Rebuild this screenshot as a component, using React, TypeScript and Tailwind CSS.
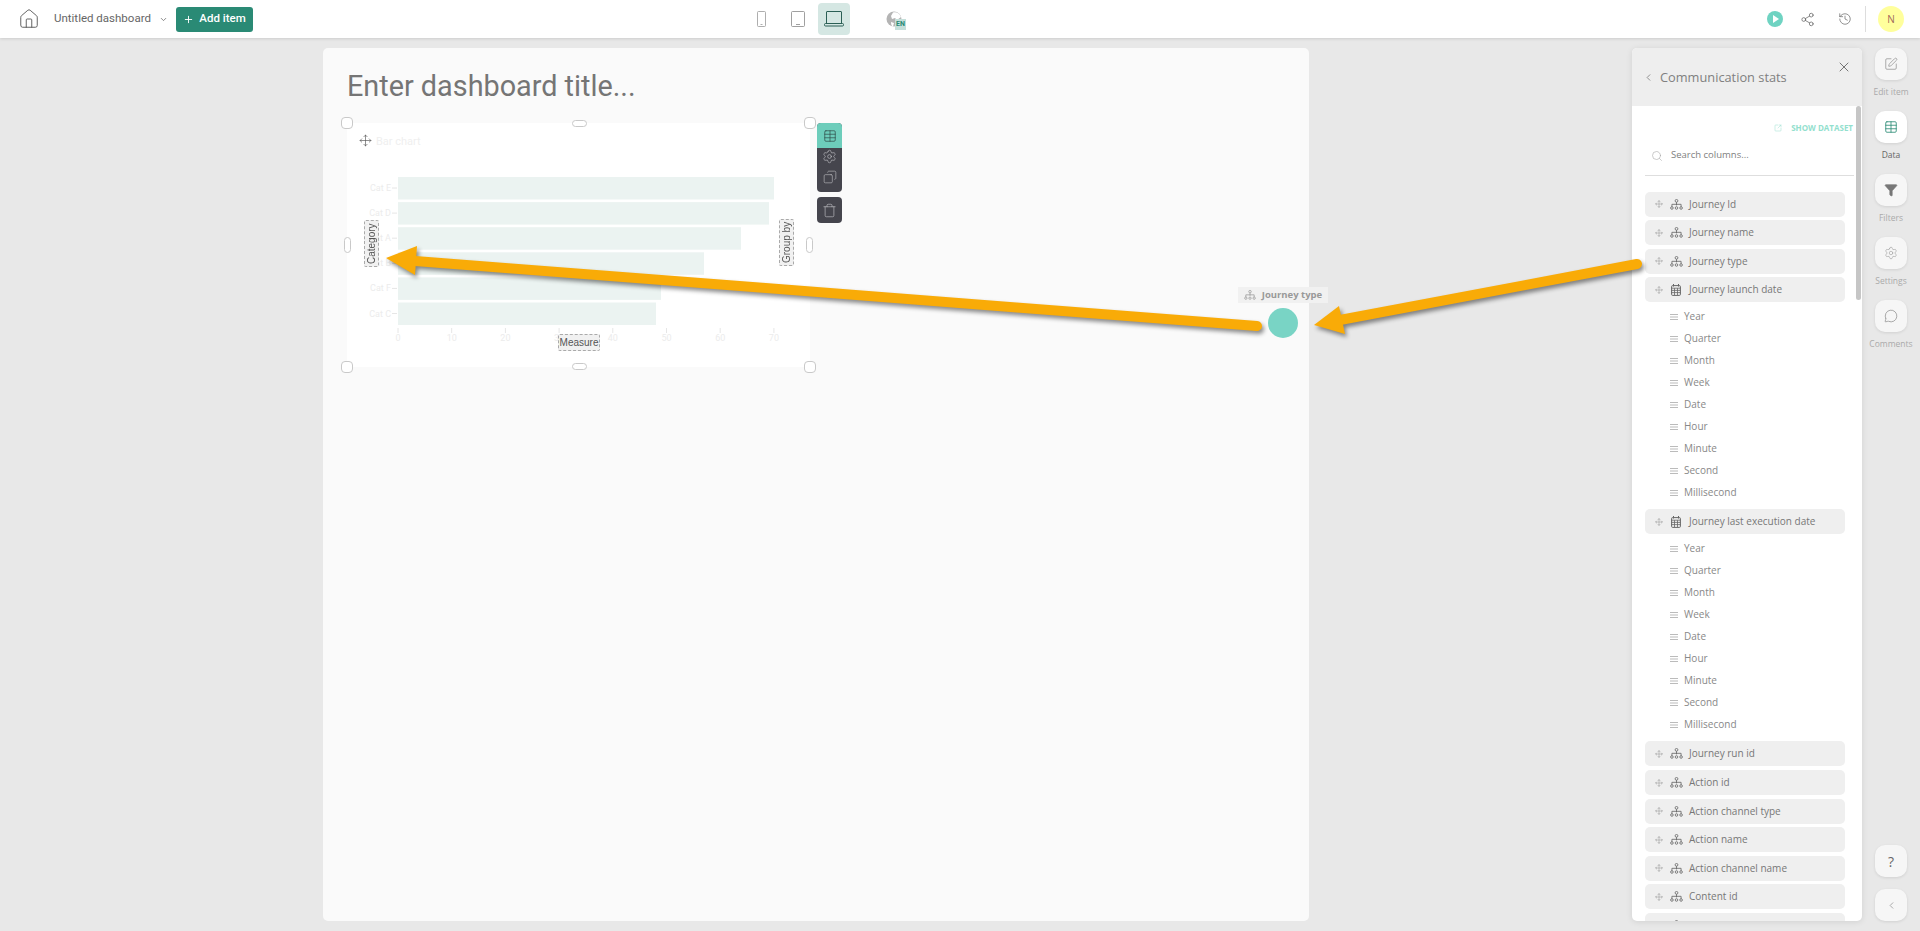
import { ChevronDown, ChevronLeft, Copy, Filter, History, House, MessageCircle, Move, Plus, Search, Settings, Share2, SquareArrowOutUpRight, SquarePen, Table, Trash, X } from "lucide-react"

const dateParts = ["Year", "Quarter", "Month", "Week", "Date", "Hour", "Minute", "Second", "Millisecond"]

const columns = [
  { name: "Journey Id" },
  { name: "Journey name" },
  { name: "Journey type" },
  { name: "Journey launch date", date: true },
  { name: "Journey last execution date", date: true },
  { name: "Journey run id" },
  { name: "Action id" },
  { name: "Action channel type" },
  { name: "Action name" },
  { name: "Action channel name" },
  { name: "Content id" },
  { name: "" }, // only the top edge of this row shows, the panel cuts it off
]

const railItems = [
  { label: "Edit item", icon: <SquarePen className="h-[14px] w-[14px] text-[#8a8a8a]" strokeWidth={1.2} /> },
  { label: "Data", active: true, icon: <Table className="h-[14px] w-[14px] text-[#2a8a75]" strokeWidth={1.4} /> },
  { label: "Filters", icon: <Filter className="h-[14px] w-[14px] fill-[#777] text-[#777]" strokeWidth={1.2} /> },
  { label: "Settings", icon: <Settings className="h-[14px] w-[14px] text-[#999]" strokeWidth={1} /> },
  { label: "Comments", icon: <MessageCircle className="h-[14px] w-[14px] text-[#888]" strokeWidth={1.2} /> },
]

const bars = [
  { label: "Cat E", end: 774 },
  { label: "Cat D", end: 769 },
  { label: "Cat A", end: 741 },
  { label: "Cat B", end: 704 },
  { label: "Cat F", end: 661 },
  { label: "Cat C", end: 656 },
]

function HierarchyIcon({ className }: { className?: string }) {
  return (
    <svg viewBox="0 0 14 12" fill="none" stroke="currentColor" strokeWidth="0.9" className={className}>
      <circle cx="7" cy="2" r="1.5" />
      <path d="M7 3.5V7M2 8.5V5.8H12V8.5" />
      <circle cx="2" cy="9.8" r="1.4" />
      <circle cx="7" cy="9.8" r="1.4" />
      <circle cx="12" cy="9.8" r="1.4" />
    </svg>
  )
}

function DateIcon() {
  return (
    <svg viewBox="0 0 10 12" fill="none" stroke="currentColor" className="h-[12px] w-[10px] text-[#666]">
      <rect x="0.6" y="1.6" width="8.8" height="9.8" rx="1" strokeWidth="1" />
      <path d="M2.5 0V2.5M7.5 0V2.5" strokeWidth="1" />
      <path d="M.6 4.2H9.4M.6 6.4H9.4M.6 8.6H9.4M3.5 4.2V11M6.5 4.2V11" strokeWidth="0.8" />
    </svg>
  )
}

function LinesIcon() {
  return (
    <svg viewBox="0 0 8 6" className="h-[6px] w-[8px] shrink-0 text-[#aaa]" stroke="currentColor" strokeWidth="0.8">
      <path d="M0 .5H8M0 3H8M0 5.5H8" />
    </svg>
  )
}

function ColumnRow({ name, date }: { name: string; date?: boolean }) {
  return (
    <div className="flex h-[25px] w-[200px] shrink-0 items-center rounded-[5px] bg-[#efefef] pl-[10px] text-[10px] text-[#777]">
      <Move className="h-[8px] w-[8px] text-[#999]" strokeWidth={1.6} />
      <span className="ml-[6px] flex w-[14px] justify-center">
        {date ? <DateIcon /> : <HierarchyIcon className="h-[11px] w-[13px] text-[#666]" />}
      </span>
      <span className="ml-[6px] whitespace-nowrap">{name}</span>
    </div>
  )
}

function Handle({ className }: { className: string }) {
  return <div className={`absolute rounded-[4px] border border-[#c9c9c9] bg-white ${className}`} />
}

function BarChart() {
  const ticks = [0, 10, 20, 30, 40, 50, 60, 70]
  return (
    <svg viewBox="347 123 463 244" className="h-full w-full">
      <text x="376" y="145" fontSize="11" fill="#efefef" fontFamily="Roboto, sans-serif">Bar chart</text>
      {bars.map((b, i) => {
        const top = 177 + i * 25.1
        return (
          <g key={b.label}>
            <rect x="398" y={top} width={b.end - 398} height="22.5" fill="#ebf3f1" />
            <text x="391" y={top + 14} fontSize="9" textAnchor="end" fill="#ececec" fontFamily="Roboto, sans-serif">{b.label}</text>
            <path d={`M392 ${top + 11}H397`} stroke="#e6e6e6" strokeWidth="1" />
          </g>
        )
      })}
      {ticks.map((t) => {
        const x = 398 + t * 5.37
        return (
          <g key={t}>
            <path d={`M${x} 328V333`} stroke="#e6e6e6" strokeWidth="1" />
            <text x={x} y="341" fontSize="9" textAnchor="middle" fill="#ececec" fontFamily="Roboto, sans-serif">{t}</text>
          </g>
        )
      })}
    </svg>
  )
}

function DropLabel({ text, className }: { text: string; className: string }) {
  return (
    <div className={`absolute flex items-center justify-center rounded-[2px] border border-dashed border-[#aaa] bg-[#f1f1f1] font-['Liberation_Sans',sans-serif] text-[10px] leading-none text-[#555] ${className}`}>
      {text}
    </div>
  )
}

function ChartCard() {
  return (
    <div className="relative mt-[18px] h-[244px] w-[463px] bg-white">
      <BarChart />
      <Move className="absolute left-[12px] top-[11px] h-[13px] w-[13px] text-[#555]" strokeWidth={1.2} />
      <DropLabel text="Category" className="left-[17px] top-[97px] h-[47px] w-[15px] rotate-180 [writing-mode:vertical-rl]" />
      <DropLabel text="Group by" className="left-[432px] top-[96px] h-[47px] w-[15px] rotate-180 [writing-mode:vertical-rl]" />
      <DropLabel text="Measure" className="left-[211px] top-[211px] h-[17px] w-[42px]" />

      <Handle className="-left-[6px] -top-[6px] h-[12px] w-[12px]" />
      <Handle className="-top-[3px] left-[225px] h-[7px] w-[15px]" />
      <Handle className="-right-[6px] -top-[6px] h-[12px] w-[12px]" />
      <Handle className="-left-[3px] top-[114px] h-[16px] w-[7px]" />
      <Handle className="-right-[3px] top-[114px] h-[16px] w-[7px]" />
      <Handle className="-bottom-[6px] -left-[6px] h-[12px] w-[12px]" />
      <Handle className="-bottom-[3px] left-[225px] h-[7px] w-[15px]" />
      <Handle className="-bottom-[6px] -right-[6px] h-[12px] w-[12px]" />

      <div className="absolute left-[470px] top-0 flex flex-col gap-[5px]">
        <div className="flex h-[69px] w-[25px] flex-col items-center overflow-hidden rounded-[4px] bg-[#45454d]">
          <div className="flex h-[25px] w-full items-center justify-center bg-[#6dcdbb]">
            <Table className="h-[14px] w-[14px] text-[#2f4a48]" strokeWidth={1.2} />
          </div>
          <Settings className="mt-[1px] h-[15px] w-[15px] text-[#c4c4c8]" strokeWidth={1} />
          <Copy className="mt-[6px] h-[14px] w-[14px] -scale-x-100 text-[#c4c4c8]" strokeWidth={1} />
        </div>
        <div className="flex h-[26px] w-[25px] items-center justify-center rounded-[4px] bg-[#45454d]">
          <Trash className="h-[15px] w-[15px] text-[#c4c4c8]" strokeWidth={1} />
        </div>
      </div>
    </div>
  )
}

function TopBar() {
  return (
    <header className="relative z-10 flex h-[38px] shrink-0 items-center bg-white shadow-[0_1px_3px_rgba(0,0,0,0.12)]">
      <House className="ml-[18px] h-[22px] w-[22px] text-[#555]" strokeWidth={1} />
      <span className="ml-[14px] w-[96px] whitespace-nowrap font-['Roboto',sans-serif] text-[11.5px] text-[#666]">Untitled dashboard</span>
      <ChevronDown className="ml-[9px] h-[9px] w-[9px] text-[#666]" />
      <button className="ml-[8px] flex h-[25px] w-[77px] items-center justify-center gap-[5px] rounded-[3px] bg-[#2a8a75] font-['Roboto',sans-serif] text-[11.5px] font-medium text-white">
        <Plus className="h-[11px] w-[11px]" strokeWidth={2} />
        Add item
      </button>
      <svg viewBox="0 0 9 16" fill="none" stroke="#999" strokeWidth="0.8" className="ml-[504px] h-[16px] w-[9px]">
        <rect x="0.5" y="0.5" width="8" height="15" rx="1" />
        <path d="M3.5 13.5H5.5" />
      </svg>
      <svg viewBox="0 0 14 16" fill="none" stroke="#888" strokeWidth="0.8" className="ml-[25px] h-[16px] w-[14px]">
        <rect x="0.5" y="0.5" width="13" height="15" rx="1" />
        <path d="M5 13.5H9" />
      </svg>
      <div className="ml-[13px] flex h-[32px] w-[32px] items-center justify-center rounded-[4px] bg-[#d5e7e3]">
        <svg viewBox="0 0 20 16" fill="none" stroke="#2b5f55" strokeWidth="1" className="h-[16px] w-[20px]">
          <rect x="2.5" y="0.5" width="15" height="12" rx="0.5" />
          <rect x="0.5" y="12.5" width="19" height="2.5" rx="1" />
        </svg>
      </div>
      <div className="relative ml-[36px] h-[16px] w-[20px]">
        <svg viewBox="0 0 16 16" className="h-[16px] w-[16px]">
          <circle cx="8" cy="8" r="7.5" fill="#b4b4b4" />
          <path d="M7 1.5C10 .5 14 2 15 6L11 9 9 7 6 8 5 5Z" fill="#fff" />
          <path d="M5 11 8 12 7 15.5C6 15.5 5 14 5 11Z" fill="#fff" />
        </svg>
        <span className="absolute -bottom-[3px] left-[9px] flex h-[11px] w-[11px] items-center justify-center bg-[#c5dfda] font-['Roboto',sans-serif] text-[7px] font-bold text-[#2a8a75]">EN</span>
      </div>
      <div className="ml-auto flex items-center">
        <div className="flex h-[16px] w-[16px] items-center justify-center rounded-full bg-[#6fd3c2]">
          <div className="ml-[1px] h-0 w-0 border-y-[4px] border-l-[6px] border-y-transparent border-l-white" />
        </div>
        <Share2 className="ml-[17px] h-[15px] w-[15px] text-[#666]" strokeWidth={1.2} />
        <History className="ml-[23px] h-[14px] w-[14px] text-[#666]" strokeWidth={1.2} />
        <div className="ml-[13px] h-[26px] w-px bg-[#ddd]" />
        <div className="ml-[12px] mr-[16px] flex h-[26px] w-[26px] items-center justify-center rounded-full bg-[#ffff9c] text-[10px] text-[#a0695a]">N</div>
      </div>
    </header>
  )
}

function DataPanel() {
  return (
    <aside className="relative flex h-[873px] w-[230px] shrink-0 flex-col overflow-hidden rounded-[5px] bg-white shadow-[0_1px_6px_rgba(0,0,0,0.1)]">
      <div className="relative flex h-[58px] shrink-0 items-center bg-[#eeeeee] pl-[11px] pt-[1px] text-[12.8px] text-[#808080]">
        <ChevronLeft className="h-[11px] w-[11px] text-[#666]" strokeWidth={1.5} />
        <span className="ml-[6px] whitespace-nowrap">Communication stats</span>
        <X className="absolute right-[10px] top-[11px] h-[16px] w-[16px] text-[#555]" strokeWidth={1.2} />
      </div>
      <div className="absolute right-[1px] top-[58px] h-[194px] w-[5px] rounded-full bg-[#c6c6c6]" />
      <div className="mt-[15px] flex h-[13px] shrink-0 items-center justify-end pr-[9px] pt-[1px] text-[8px] font-bold text-[#93dfce]">
        <SquareArrowOutUpRight className="mr-[9px] h-[8px] w-[8px]" strokeWidth={1.4} />
        SHOW DATASET
      </div>
      <div className="ml-[13px] mr-[8px] mt-[4px] flex h-[38px] shrink-0 items-center border-b border-[#dedede] pb-[2px] text-[9.5px] text-[#808080]">
        <Search className="ml-[6px] h-[12px] w-[12px] text-[#aaa]" strokeWidth={1.2} />
        <span className="ml-[8px]">Search columns...</span>
      </div>
      <div className="ml-[13px] mt-[15.5px] flex flex-col gap-[3.6px]">
        {columns.map((c) => (
          <div key={c.name} className="flex flex-col">
            <ColumnRow name={c.name} date={c.date} />
            {c.date && (
              <div className="mb-[2px] mt-[3.5px] flex flex-col">
                {dateParts.map((p) => (
                  <div key={p} className="flex h-[22px] items-center pl-[25px] text-[10px] text-[#888]">
                    <LinesIcon />
                    <span className="ml-[6px]">{p}</span>
                  </div>
                ))}
              </div>
            )}
          </div>
        ))}
      </div>
    </aside>
  )
}

function RailButton({ children, active }: { children: React.ReactNode; active?: boolean }) {
  return (
    <div className={`flex h-[32px] w-[32px] items-center justify-center rounded-[10px] shadow-[0_1px_3px_rgba(0,0,0,0.1)] ${active ? "bg-white" : "bg-[#f6f6f6]"}`}>
      {children}
    </div>
  )
}

function Rail() {
  return (
    <nav className="ml-[13px] flex h-[873px] w-[32px] shrink-0 flex-col items-center">
      {railItems.map((item) => (
        <div key={item.label} className="mb-[12px] flex h-[51px] flex-col items-center">
          <RailButton active={item.active}>{item.icon}</RailButton>
          <span className={`mt-[5px] whitespace-nowrap text-[8.5px] leading-[14px] ${item.active ? "text-[#666]" : "text-[#aaa]"}`}>{item.label}</span>
        </div>
      ))}
      <div className="mt-auto flex flex-col gap-[12px]">
        <RailButton><span className="text-[14px] text-[#666]">?</span></RailButton>
        <RailButton><ChevronLeft className="h-[11px] w-[11px] text-[#888]" strokeWidth={1.5} /></RailButton>
      </div>
    </nav>
  )
}

function Arrows() {
  return (
    <svg viewBox="0 0 1920 931" className="pointer-events-none absolute left-0 top-0 z-20 h-[931px] w-[1920px] drop-shadow-[2px_3px_2px_rgba(0,0,0,0.45)]">
      <path d="M415 261 1257 326" stroke="#f9ab07" strokeWidth="10" strokeLinecap="round" />
      <polygon points="386,258 417,246 415,275" fill="#f9ab07" />
      <path d="M1340 320 1637 264" stroke="#f9ab07" strokeWidth="10" strokeLinecap="round" />
      <polygon points="1314,325 1339,306 1345,334" fill="#f9ab07" />
    </svg>
  )
}

export default function App() {
  return (
    <div className="relative flex h-[931px] w-full flex-col overflow-hidden bg-[#e8e8e8] font-['Open_Sans',sans-serif]">
      <TopBar />
      <main className="flex flex-1 pt-[10px]">
        <section className="ml-[323px] h-[873px] w-[986px] rounded-[5px] bg-[#fafafa] px-[24px] pt-[19px]">
          <h1 className="font-['Roboto',sans-serif] text-[28.8px] leading-[38px] text-[#757575]">Enter dashboard title...</h1>
          <ChartCard />
        </section>
        <div className="ml-auto flex pr-[13px]">
          <DataPanel />
          <Rail />
        </div>
      </main>
      <div className="absolute left-[1238px] top-[287px] z-10 flex h-[16px] w-[90px] items-center justify-center gap-[6px] bg-[#f1f1f1] text-[9.5px] font-bold text-[#999]">
        <HierarchyIcon className="h-[10px] w-[12px] text-[#999]" />
        Journey type
      </div>
      <div className="absolute left-[1268px] top-[308px] z-10 h-[30px] w-[30px] rounded-full bg-[#79d4c5]" />
      <Arrows />
    </div>
  )
}
